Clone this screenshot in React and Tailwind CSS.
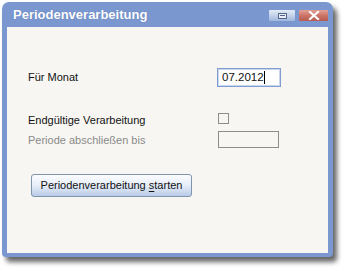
import React from "react";

export default function App() {
    return (
        <div className="w-[346px] h-[271px] bg-white pt-[2px] pl-[2px]" style={{ fontFamily: '"Liberation Sans", Arial, sans-serif' }}>
            <div className="w-[331px] h-[255px] flex flex-col rounded-t-[7px] rounded-b-[4px] bg-[#7a97d0] shadow-[4px_5px_5px_rgba(0,0,0,0.6)]">
                {/* Title bar */}
                <div className="h-[25px] flex items-center pl-[11px] pr-[5px]">
                    <span className="text-[13px] font-bold text-white leading-none [text-shadow:0_0_1px_rgba(60,80,140,0.5)]">Periodenverarbeitung</span>
                    <div className="ml-auto flex items-center gap-[4px] mt-[2px]">
                        <div className="w-[26px] h-[11px] flex items-center justify-center bg-gradient-to-b from-[#e3ebf6] via-[#c4d3ea] to-[#9fb6dc] rounded-[1px]">
                            <div className="w-[9px] h-[6px] border border-[#55648a] bg-[#e8eef8] flex items-center justify-center">
                                <div className="w-[5px] h-[1px] bg-[#55648a]" />
                            </div>
                        </div>
                        <div className="w-[29px] h-[11px] flex items-center justify-center bg-gradient-to-b from-[#e2a096] via-[#cc7467] to-[#b65a4f] rounded-[1px]">
                            <svg width="12" height="9" viewBox="0 0 12 9">
                                <path d="M2 1 L10 8 M10 1 L2 8" stroke="#ffffff" strokeWidth="2.2" strokeLinecap="square" />
                            </svg>
                        </div>
                    </div>
                </div>

                {/* Content */}
                <div className="flex-1 mx-[5px] mb-[4px] bg-[#f7f6f2] pl-[21px] pt-[41px] text-[11px] text-[#111]">
                    <div className="h-[19px] flex items-center">
                        <span className="w-[189px]">Für Monat</span>
                        <div className="w-[64px] h-[19px] border border-[#7f9dd0] shadow-[inset_0_0_0_1px_#c9d6ee] bg-white flex items-center pl-[4px] text-[11.5px]">
                            07.2012<span className="w-px h-[13px] bg-black" />
                        </div>
                    </div>

                    <div className="h-[11px] mt-[26px] flex items-center">
                        <span className="w-[190px] mt-[4px]">Endgültige Verarbeitung</span>
                        <div className="w-[11px] h-[11px] border border-[#8c8c8c] bg-[#f7f6f2]" />
                    </div>

                    <div className="h-[17px] mt-[7px] flex items-center">
                        <span className="w-[190px] text-[#8a8a8a] mt-[1px]">Periode abschließen bis</span>
                        <div className="w-[61px] h-[17px] border border-[#8c8c8c] bg-[#f7f6f2]" />
                    </div>

                    <button className="mt-[26px] ml-[3px] w-[161px] h-[23px] rounded-[3px] border border-[#8094ae] bg-gradient-to-b from-[#fbfcfe] via-[#e6edf8] to-[#b9cbe8] flex items-center justify-center text-[11px] text-[#111] whitespace-pre">
                        Periodenverarbeitung <span className="underline underline-offset-2">s</span>tarten
                    </button>
                </div>
            </div>
        </div>
    );
}
